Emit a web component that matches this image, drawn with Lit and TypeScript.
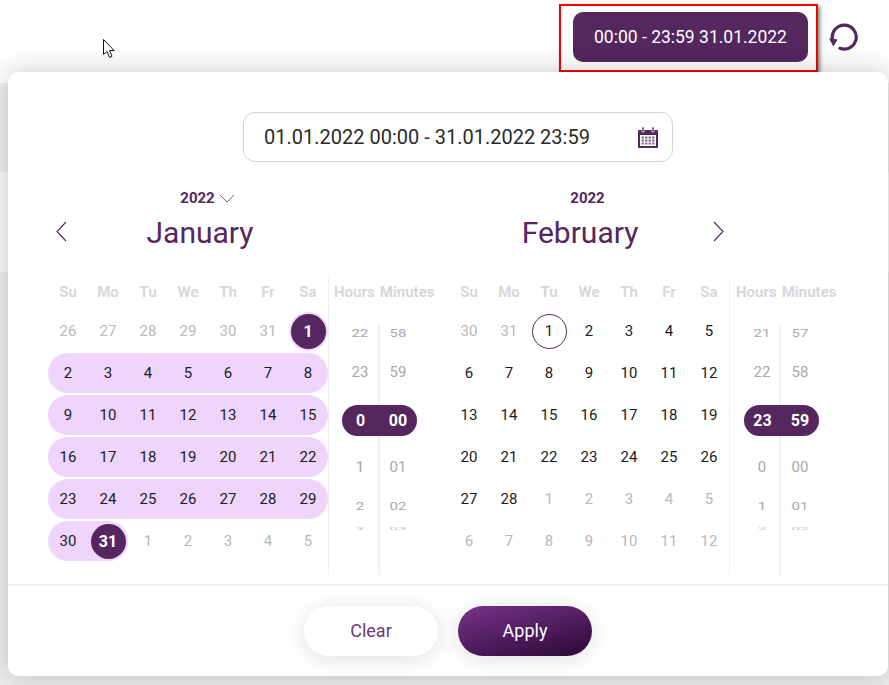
import { LitElement, html, css, svg } from "lit";
import { customElement } from "lit/decorators.js";

type Day = { n: number; kind?: "muted" | "sel" | "today"; band?: "mid" | "start" | "end" };

const range = (a: number, b: number, extra: Partial<Day> = {}): Day[] => {
  const out: Day[] = [];
  for (let n = a; n <= b; n++) out.push({ n, ...extra });
  return out;
};

const banded = (a: number, b: number): Day[] =>
  range(a, b).map((d, i, all) => ({
    ...d,
    band: i === 0 ? "start" : i === all.length - 1 ? "end" : "mid",
  }));

const JAN: Day[] = [
  ...range(26, 31, { kind: "muted" }),
  { n: 1, kind: "sel" },
  ...banded(2, 8),
  ...banded(9, 15),
  ...banded(16, 22),
  ...banded(23, 29),
  { n: 30, band: "start" },
  { n: 31, kind: "sel", band: "end" },
  ...range(1, 5, { kind: "muted" }),
];

const FEB: Day[] = [
  ...range(30, 31, { kind: "muted" }),
  { n: 1, kind: "today" },
  ...range(2, 28),
  ...range(1, 12, { kind: "muted" }),
];

const WEEK = ["Su", "Mo", "Tu", "We", "Th", "Fr", "Sa"];

const JAN_TIME: [string, string][] = [["22", "58"], ["23", "59"], ["0", "00"], ["1", "01"], ["2", "02"], ["3", "03"]];
const FEB_TIME: [string, string][] = [["21", "57"], ["22", "58"], ["23", "59"], ["0", "00"], ["1", "01"], ["2", "02"]];

const chevron = (points: string, w: number, h: number, sw = 1.1, col = "#54275f") => html`<svg class="chev" width=${w} height=${h} viewBox="0 0 ${w} ${h}">${svg`<polyline points=${points} fill="none" stroke=${col} stroke-width=${sw}/>`}</svg>`;

@customElement("app-root")
export class AppRoot extends LitElement {
  static styles = css`
    :host {
      display: block;
      font-family: Roboto, "Liberation Sans", sans-serif;
    }
    .page {
      position: relative;
      width: 889px;
      height: 685px;
      overflow: hidden;
      background: #fff;
    }
    .backdrop {
      position: absolute;
      left: 0;
      top: 83px;
      right: 0;
      bottom: 0;
      display: flex;
      flex-direction: column;
    }
    .bd1 { height: 89px; background: #efefef; }
    .bd2 { height: 100px; background: #fbfbfb; }
    .bd3 { flex: 1; background: #eee; }
    .topbar {
      position: relative;
      height: 72px;
      display: flex;
      justify-content: flex-end;
      align-items: flex-start;
      box-sizing: border-box;
      padding: 4px 30px 0 0;
      gap: 11px;
    }
    .mark {
      box-sizing: border-box;
      width: 259px;
      height: 68px;
      border: 2px solid #f50000;
      box-shadow: 2px 2px 4px rgba(0, 0, 0, 0.5);
      padding: 6px 8px 0 12px;
    }
    .range-btn {
      height: 50px;
      border-radius: 10px;
      background: #54275f;
      color: #fff;
      font-size: 17.5px;
      display: flex;
      align-items: center;
      justify-content: center;
    }
    .reload { margin-top: 18px; display: block; }
    .panel {
      position: relative;
      margin-left: 8px;
      width: 880px;
      height: 604px;
      background: #fff;
      border-radius: 10px;
      box-shadow: 0 0 28px rgba(0, 0, 0, 0.22);
      box-sizing: border-box;
      padding-top: 40px;
      display: flex;
      flex-direction: column;
    }
    .input {
      box-sizing: border-box;
      align-self: center;
      margin-left: 20px;
      width: 430px;
      height: 50px;
      border: 1px solid #d4d4d4;
      border-radius: 12px;
      display: flex;
      align-items: center;
      justify-content: space-between;
      padding: 0 14px 0 20px;
      font-size: 20px;
      color: #2a2a2a;
    }
    .input span { margin-top: -1px; }
    .heads {
      display: flex;
      align-items: flex-end;
      margin-top: 26px;
      padding-left: 47px;
    }
    .arrow { width: 14px; height: 40px; margin-bottom: 2px; display: flex; align-items: center; }
    .title { width: 262px; text-align: center; }
    .title + .title { margin-left: 118px; }
    .year {
      height: 20px;
      padding-left: 15px;
      display: flex;
      align-items: center;
      justify-content: center;
      gap: 4px;
      font-size: 15px;
      font-weight: 700;
      color: #54275f;
    }
    .month {
      margin-top: 5px;
      height: 40px;
      line-height: 40px;
      font-size: 30px;
      color: #54275f;
    }
    .chev { display: block; }
    .cals {
      margin-top: 24px;
      padding-left: 40px;
      display: flex;
    }
    .cal { display: flex; width: 401px; height: 298px; }
    .grid {
      width: 280px;
      display: grid;
      grid-template-columns: repeat(7, 40px);
      grid-template-rows: 32px;
      grid-auto-rows: 40px;
      row-gap: 2px;
      align-content: start;
    }
    .wk {
      padding-top: 5px;
      box-sizing: border-box;
      line-height: 20px;
      text-align: center;
      font-size: 15px;
      font-weight: 700;
      color: #d8d8d8;
    }
    .cell {
      display: flex;
      align-items: center;
      justify-content: center;
      font-size: 15px;
      color: #1c1c1c;
    }
    .cell.muted { color: #b8b8b8; }
    .cell.mid { background: #efd5fb; }
    .cell.start { background: #efd5fb; border-radius: 20px 0 0 20px; }
    .cell.end { background: #efd5fb; border-radius: 0 20px 20px 0; }
    .dot {
      box-sizing: border-box;
      width: 35px;
      height: 35px;
      border-radius: 50%;
      display: flex;
      align-items: center;
      justify-content: center;
    }
    .sel .dot {
      background: #54275f;
      color: #fff;
      font-size: 16px;
      font-weight: 700;
      box-shadow: 0 0 0 2px #efd5fb;
    }
    .today .dot { border: 1px solid #54275f; }
    .time { box-sizing: border-box; width: 121px; border-left: 1px solid #f1f1f1; }
    .time-head {
      display: flex;
      gap: 5px;
      padding: 5px 0 0 5px;
      height: 48px;
      box-sizing: border-box;
      line-height: 20px;
      font-size: 15px;
      font-weight: 700;
      color: #d8d8d8;
    }
    .cal + .cal .time-head { padding-left: 6px; }
    .wheel { position: relative; width: 76px; height: 250px; margin-left: 12px; }
    .cal + .cal .wheel { margin-left: 13px; }
    .wheel::before {
      content: "";
      position: absolute;
      left: 37px;
      top: 0;
      bottom: 0;
      width: 2px;
      background: #f1f1f1;
    }
    .cal + .cal .wheel::before { left: 36px; }
    .row { position: relative; display: flex; align-items: center; font-size: 15px; color: #a8a8a8; }
    .r1 { height: 16px; }
    .r2 { height: 62px; }
    .r3 { height: 35px; }
    .r4 { height: 58px; }
    .r5 { height: 20px; }
    .r6 { height: 26px; }
    .row span { width: 38px; text-align: center; }
    .r1 span, .r5 span { transform: scaleY(0.7); }
    .r6 span { transform: scaleY(0.25); color: #c4c4c4; }
    .pill {
      display: flex;
      align-items: center;
      margin-left: 1px;
      width: 75px;
      height: 31px;
      border-radius: 16px;
      background: #54275f;
      color: #fff;
      font-weight: 700;
      font-size: 16px;
    }
    .pill span:first-child { width: 37px; }
    .foot {
      margin-top: 9px;
      height: 92px;
      box-sizing: border-box;
      border-top: 2px solid #f2f2f2;
      display: flex;
      justify-content: center;
      gap: 20px;
      padding: 20px 0 0 0;
    }
    .btn {
      box-sizing: border-box;
      width: 134px;
      height: 50px;
      padding-bottom: 2px;
      border-radius: 25px;
      display: flex;
      align-items: center;
      justify-content: center;
      font-size: 18px;
    }
    .clear {
      background: #fff;
      color: #6a3a78;
      box-shadow: 0 3px 22px rgba(0, 0, 0, 0.13);
    }
    .apply {
      background: linear-gradient(165deg, #6f2f80 10%, #2f0a3b 95%);
      color: #fff;
      box-shadow: 0 3px 22px rgba(0, 0, 0, 0.13);
    }
    .cursor { position: absolute; left: 103px; top: 39px; display: block; }
  `;

  private dayCell(d: Day) {
    const cls = ["cell", d.kind ?? "", d.band ?? ""].join(" ");
    return html`<div class=${cls}>${d.kind === "sel" || d.kind === "today" ? html`<div class="dot">${d.n}</div>` : d.n}</div>`;
  }

  private calendar(days: Day[], time: [string, string][]) {
    return html`<div class="cal">
      <div class="grid">
        ${WEEK.map((w) => html`<div class="wk">${w}</div>`)}
        ${days.map((d) => this.dayCell(d))}
      </div>
      <div class="time">
        <div class="time-head"><span>Hours</span><span>Minutes</span></div>
        <div class="wheel">
          ${time.map(([h, m], i) =>
            i === 2
              ? html`<div class="row r3"><div class="pill"><span>${h}</span><span>${m}</span></div></div>`
              : html`<div class="row r${i + 1}"><span>${h}</span><span>${m}</span></div>`
          )}
        </div>
      </div>
    </div>`;
  }

  render() {
    return html`<div class="page">
      <div class="backdrop"><div class="bd1"></div><div class="bd2"></div><div class="bd3"></div></div>
      <div class="topbar">
        <div class="mark"><div class="range-btn">00:00 - 23:59 31.01.2022</div></div>
        <svg class="reload" width="30" height="30" viewBox="0 0 30 30">
          <path d="M11 26.3 A12 12 0 1 0 3.4 17" fill="none" stroke="#54275f" stroke-width="3.2" stroke-linecap="round"/>
          <path d="M0 16.3 L8.6 17.6 L4.3 24.4 Z" fill="#54275f"/>
        </svg>
      </div>
      <div class="panel">
        <div class="input">
          <span>01.01.2022 00:00 - 31.01.2022 23:59</span>
          <svg width="20" height="21" viewBox="0 0 20 21">
            <path d="M1 3h18a1 1 0 0 1 1 1v16a1 1 0 0 1-1 1H1a1 1 0 0 1-1-1V4a1 1 0 0 1 1-1z" fill="#54275f"/>
            <rect x="4" y="0" width="2" height="5" fill="#54275f" stroke="#fff" stroke-width="0.6"/>
            <rect x="14" y="0" width="2" height="5" fill="#54275f" stroke="#fff" stroke-width="0.6"/>
            <rect x="2" y="8" width="16" height="11" fill="#fff"/>
            <path d="M3.5 9.5h2.5v2h-2.5zM7 9.5h2.5v2H7zM10.5 9.5H13v2h-2.5zM14 9.5h2.5v2H14zM3.5 12.5h2.5v2h-2.5zM7 12.5h2.5v2H7zM10.5 12.5H13v2h-2.5zM14 12.5h2.5v2H14zM3.5 15.5h2.5v2h-2.5zM7 15.5h2.5v2H7zM10.5 15.5H13v2h-2.5zM14 15.5h2.5v2H14z" fill="#8a6b93"/>
          </svg>
        </div>
        <div class="heads">
          <div class="arrow">${chevron("11,1 2,10.5 11,20", 14, 21)}</div>
          <div class="title">
            <div class="year"><span>2022</span>${chevron("1,1 8,8 15,1", 16, 9, 0.9, "#6e4a78")}</div>
            <div class="month">January</div>
          </div>
          <div class="title">
            <div class="year"><span>2022</span></div>
            <div class="month">February</div>
          </div>
          <div class="arrow">${chevron("3,1 12,10.5 3,20", 14, 21)}</div>
        </div>
        <div class="cals">
          ${this.calendar(JAN, JAN_TIME)}
          ${this.calendar(FEB, FEB_TIME)}
        </div>
        <div class="foot">
          <div class="btn clear">Clear</div>
          <div class="btn apply">Apply</div>
        </div>
      </div>
      <svg class="cursor" width="13" height="20" viewBox="0 0 13 20">
        <path d="M0.5 0.5 V15.5 L4 12.5 L6.6 18.5 L9 17.3 L6.5 11.6 H11.2 Z" fill="#fff" stroke="#111" stroke-width="1"/>
      </svg>
    </div>`;
  }
}
